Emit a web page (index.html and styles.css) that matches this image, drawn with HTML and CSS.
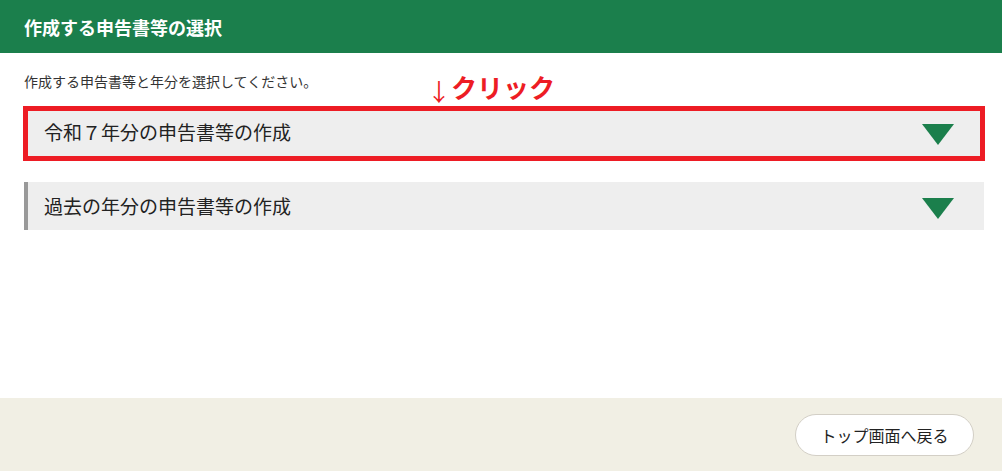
FILE: index.html
```html
<!DOCTYPE html>
<html lang="ja">
<head>
<meta charset="utf-8">
<title>作成する申告書等の選択</title>
<link rel="stylesheet" href="styles.css">
</head>
<body>
<div class="page">
  <header class="header">
    <h1 class="title">作成する申告書等の選択</h1>
  </header>
  <main class="main">
    <p class="lead">作成する申告書等と年分を選択してください。</p>
    <div class="list">
      <div class="item-wrap">
        <div class="item">
          <span class="item-label">令和７年分の申告書等の作成</span>
          <span class="tri"></span>
        </div>
        <div class="highlight"></div>
        <div class="note"><span class="arrow">↓</span>クリック</div>
      </div>
      <div class="item">
        <span class="item-label">過去の年分の申告書等の作成</span>
        <span class="tri"></span>
      </div>
    </div>
  </main>
  <footer class="footer">
    <button class="back-btn" type="button">トップ画面へ戻る</button>
  </footer>
</div>
</body>
</html>
```

FILE: styles.css
```css
html, body {
  margin: 0;
  padding: 0;
}
body {
  font-family: "Noto Sans CJK JP", "Noto Sans", "DejaVu Sans", sans-serif;
  color: #333;
  background: #fff;
}
.page {
  width: 1002px;
  height: 471px;
  display: flex;
  flex-direction: column;
  overflow: hidden;
}
.header {
  height: 53px;
  flex: 0 0 53px;
  background: #1b7f4c;
  display: flex;
  align-items: center;
  padding-left: 24px;
  box-sizing: border-box;
}
.title {
  margin: 0;
  font-size: 18px;
  font-weight: bold;
  color: #fff;
  line-height: 24px;
}
.main {
  flex: 1;
  padding: 18px 18px 0 24px;
}
.lead {
  margin: 0;
  font-size: 14px;
  line-height: 20px;
  color: #333;
}
.list {
  margin-top: 17px;
  display: flex;
  flex-direction: column;
  gap: 26px;
}
.item-wrap {
  position: relative;
}
.item {
  height: 48px;
  background: #eeeeee;
  border-left: 4px solid #999999;
  box-sizing: border-box;
  display: flex;
  align-items: center;
  justify-content: space-between;
  padding: 0 30px 0 16px;
}
.item-label {
  font-size: 19px;
  line-height: 24px;
  color: #222;
}
.tri {
  width: 0;
  height: 0;
  border-left: 16px solid transparent;
  border-right: 16px solid transparent;
  border-top: 21px solid #1b7f4c;
  margin-top: 4px;
}
.highlight {
  position: absolute;
  top: -2px;
  left: -1px;
  right: -1px;
  bottom: -5px;
  border: 5px solid #ed1c24;
  pointer-events: none;
}
.note {
  position: absolute;
  top: -36px;
  left: 403px;
  font-size: 26px;
  line-height: 30px;
  font-weight: bold;
  color: #ed1c24;
  white-space: nowrap;
}
.arrow {
  font-weight: normal;
  font-size: 24px;
  position: relative;
  top: 3px;
}
.footer {
  flex: 0 0 73px;
  height: 73px;
  background: #f1efe4;
  display: flex;
  justify-content: flex-end;
  align-items: center;
  padding-right: 28px;
  box-sizing: border-box;
}
.back-btn {
  width: 179px;
  height: 42px;
  border-radius: 21px;
  border: 1px solid #d3cfc6;
  background: #fff;
  font-family: "Noto Sans CJK JP", "Noto Sans", sans-serif;
  font-size: 16px;
  color: #222;
  padding: 0;
}
```
